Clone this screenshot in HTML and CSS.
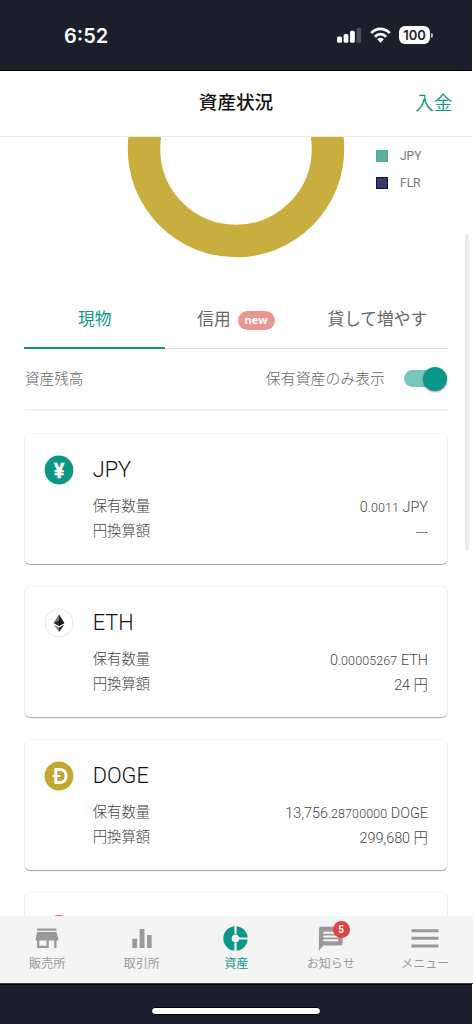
FILE: index.html
```html
<!DOCTYPE html>
<html lang="ja">
<head>
<meta charset="utf-8">
<title>資産状況</title>
<link rel="stylesheet" href="styles.css">
</head>
<body>
<div class="phone">
  <div class="status">
    <span class="clock">6:52</span>
    <div class="status-icons">
      <svg width="25" height="16" viewBox="0 0 25 16"><g fill="#fff"><rect x="0" y="9.5" width="5" height="6.2" rx="1.5"/><rect x="6.6" y="7" width="4.8" height="8.7" rx="1.5"/><rect x="13" y="3.8" width="4.8" height="11.9" rx="1.5"/></g><rect x="19.6" y="0.7" width="4.5" height="15" rx="1.5" fill="#4b505a"/></svg>
      <svg class="wifi" width="21" height="16" viewBox="0 0 21 16" fill="none" stroke="#fff" stroke-width="2.8"><path d="M1.3 6.1C6.5 0.5 14.5 0.5 19.7 6.1"/><path d="M4.9 9.7c3.3-3.4 7.9-3.4 11.2 0"/><path d="M7.2 12.2c1.9-1.8 4.7-1.8 6.6 0L10.5 15.8z" fill="#fff" stroke="none"/></svg>
      <span class="battery">100</span><span class="battery-tip"></span>
    </div>
  </div>
  <header class="header"><span></span><h1>資産状況</h1><a class="deposit">入金</a></header>
  <main class="content">
    <section class="chart">
      <svg class="donut" width="218" height="121" viewBox="0 0 218 121"><circle cx="109" cy="12" r="92" fill="none" stroke="#c7ae3e" stroke-width="32.5"/></svg>
      <ul class="legend"><li><i class="swatch jpy"></i>JPY</li><li><i class="swatch flr"></i>FLR</li></ul>
    </section>
    <nav class="tabs">
      <a class="tab active">現物</a><a class="tab">信用<span class="new">new</span></a><a class="tab">貸して増やす</a>
    </nav>
    <div class="filter"><span>資産残高</span><span class="filter-label">保有資産のみ表示</span><span class="switch"><i class="knob"></i></span></div>
    <div class="cards">
      <article class="card">
        <svg class="coin" viewBox="0 0 30 30"><circle cx="15" cy="15" r="14.4" fill="#0c9687"/><text class="yen" x="15" y="22.500" text-anchor="middle">¥</text></svg>
        <div class="info"><h2>JPY</h2>
          <div class="row"><span>保有数量</span><span class="value">0<small>.0011</small> JPY</span></div>
          <div class="row"><span>円換算額</span><span class="value dash">---</span></div></div>
      </article>
      <article class="card">
        <svg class="coin" viewBox="0 0 30 30"><circle cx="15" cy="15" r="14" fill="#fff" stroke="#dedede" stroke-width=".8"/><path d="M15 6.2L9.6 15l5.4 3.1z" fill="#777"/><path d="M15 6.2L20.4 15L15 18.1z" fill="#222"/><path d="M9.6 15L15 12.5L20.4 15L15 18.1z" fill="#111" opacity=".75"/><path d="M9.6 16.4L15 19.5V24z" fill="#888"/><path d="M20.4 16.4L15 19.5V24z" fill="#222"/></svg>
        <div class="info"><h2>ETH</h2>
          <div class="row"><span>保有数量</span><span class="value">0<small>.00005267</small> ETH</span></div>
          <div class="row"><span>円換算額</span><span class="value">24 円</span></div></div>
      </article>
      <article class="card">
        <svg class="coin" viewBox="0 0 30 30"><circle cx="15" cy="15" r="14.4" fill="#c1a632"/><path d="M11.8 8.4H16c3.700 0 6 2.500 6 6.600s-2.300 6.600-6 6.600h-4.200z" fill="none" stroke="#fff" stroke-width="3"/><path d="M8.500 15h8" stroke="#fff" stroke-width="2"/></svg>
        <div class="info"><h2>DOGE</h2>
          <div class="row"><span>保有数量</span><span class="value">13,756<small>.28700000</small> DOGE</span></div>
          <div class="row"><span>円換算額</span><span class="value">299,680 円</span></div></div>
      </article>
      <article class="card"><svg class="coin" viewBox="0 0 30 30"><circle cx="15" cy="15.300" r="14.200" fill="#e0607e"/></svg></article>
    </div>
    <i class="scrollbar"></i>
  </main>
  <nav class="bottom-nav">
    <a class="nav-item"><svg width="30" height="28" viewBox="0 0 30 28"><path fill="#999" d="M5 4.500h19.500v2.300H5zM5 8h19.500l1.700 6.200v2.300h-1.700v7.600h-2.300v-7.600h-5.500v7.600H5v-7.600H3.800v-2.300zM7.300 16.500v5.300h7.100v-5.300z"/></svg>販売所</a>
    <a class="nav-item"><svg width="30" height="28" viewBox="0 0 30 28"><path fill="#999" d="M5.300 14.800h4.900v9.300H5.300zM12.600 5h4.900v19.100h-4.900zM20 11h4.700v13.100H20z"/></svg>取引所</a>
    <a class="nav-item on"><svg width="30" height="28" viewBox="0 0 30 28"><circle cx="14.500" cy="14.500" r="8" fill="none" stroke="#0c9687" stroke-width="8.400"/><path d="M14.500 1.500v9M14.500 18.500v9M18 14.500h9" stroke="#f4f4f4" stroke-width="2.200"/></svg>資産</a>
    <a class="nav-item"><svg width="30" height="28" viewBox="0 0 30 28"><path fill="#999" d="M5.100 2.700h19.200q2.300 0 2.300 2.300v14.300q0 2.300-2.300 2.300H7.600L2.900 26.500V5q0-2.300 2.200-2.300z"/><path stroke="#f4f4f4" stroke-width="2" d="M7.300 8.700h14.900M7.300 12.500h14.900M7.300 16.300h14.900"/></svg>お知らせ<b class="count">5</b></a>
    <a class="nav-item"><svg width="30" height="28" viewBox="0 0 30 28"><path stroke="#999" stroke-width="2.900" d="M1.500 6.700h27M1.500 14.300h27M1.500 22h27"/></svg>メニュー</a>
  </nav>
  <footer class="home"><i></i></footer>
</div>
</body>
</html>
```
FILE: styles.css
```css
* { box-sizing: border-box; }
body { margin: 0; background: #fff; font-family: Roboto, "Noto Sans CJK JP", sans-serif; color: #666; }
h1, h2, ul { margin: 0; padding: 0; font-weight: inherit; list-style: none; }
svg { display: block; flex: none; }
.phone { width: 473px; height: 1024px; display: flex; flex-direction: column; overflow: hidden; }

.status { height: 71px; flex: none; width: 472px; background: #1a1f2b; border-bottom: 1px solid #000; display: flex; justify-content: space-between; padding: 0 39px 0 64px; align-items: center; color: #fff; }
.clock { font: 600 20px/24px Inter, sans-serif; padding-top: 2px; }
.status-icons { display: flex; align-items: center; }
.wifi { margin: 0 8px 0 8px; }
.battery { width: 31px; height: 18px; border-radius: 6px; background: #fff; color: #1a1f2b; font: 600 13px/18px Inter, sans-serif; text-align: center; }
.battery-tip { width: 2px; height: 5px; margin-left: 1px; border-radius: 0 2px 2px 0; background: #bbb; }

.header { height: 66px; flex: none; border-bottom: 1px solid #e8e8e8; display: grid; grid-template-columns: 1fr auto 1fr; align-items: center; padding: 0 20.500px 1px 19.500px; }
.header h1 { font-size: 18.6px; line-height: 28px; font-weight: 500; color: #111; }
.deposit { justify-self: end; font-size: 18.8px; line-height: 28px; color: #0c9687; font-weight: 350; padding-top: 1px; }

.content { flex: 1; min-height: 0; position: relative; overflow: hidden; padding: 0 25px 0 25px; }
.chart { height: 152px; display: flex; padding-left: 102px; }
.legend { padding: 7px 0 0 31px; font-size: 12px; font-weight: 400; }
.legend li { display: flex; align-items: center; height: 24px; line-height: 16px; margin-bottom: 3px; color: #777; }
.swatch { width: 12px; height: 12px; margin-right: 12px; }
.jpy { background: #5bb09f; border: 1px solid #4aaa98; }
.flr { background: #373967; border: 1px solid #11104e; }

.tabs { display: flex; height: 60px; margin: 0 0 0 -1px; border-bottom: 1px solid #ddd; }
.tab { flex: 1; display: flex; align-items: center; justify-content: center; font-size: 16.700px; line-height: 24px; height: 60px; padding-top: 2px; }
.active { color: #0c9687; border-bottom: 2px solid #0c9687; padding-top: 4px; }
.new { margin-left: 7px; width: 37px; height: 19px; border-radius: 10px; background: #ea9693; color: #fff; font: 700 11px/18px "Open Sans", sans-serif; text-align: center; }
.filter { height: 62px; padding-bottom: 1px; border-bottom: 2px solid #f3f3f3; display: flex; align-items: center; font-size: 14.600px; line-height: 20px; color: #666; font-weight: 300; }
.filter span:not(.switch) { margin-top: 1px; }
.filter .filter-label { margin-left: auto; font-size: 14.900px; }
.switch { width: 43px; height: 17px; margin: 0 1px 0 19px; border-radius: 9px; background: #76c6bd; display: flex; align-items: center; justify-content: flex-end; }
.knob { width: 24px; height: 24px; flex: none; border-radius: 50%; background: #0c9687; box-shadow: 0 1px 2px #0006; }

.cards { display: flex; flex-direction: column; gap: 23px; padding: 23px 1px 0 0; }
.card { height: 130px; flex: none; border-radius: 5px; background: #fff; box-shadow: 0 1px 1px #0005, 0 0 2px #0002; display: flex; padding: 21px 19px 0 19px; }
.coin { width: 30px; height: 30px; margin-right: 18.700px; }
.yen { font: 700 20px Roboto, sans-serif; fill: #fff; stroke: #fff; stroke-width: .3px; }
.info { flex: 1; }
.info h2 { font-size: 21.700px; line-height: 28px; padding-top: 1px; color: #111; font-weight: 350; }
.row { display: flex; justify-content: space-between; height: 25px; line-height: 25px; font-size: 14.400px; font-weight: 300; color: #444; }
.info h2 + .row { margin-top: 10px; }
.value { font-size: 14.400px; padding-top: 1px; }
.value small { font-size: 12.500px; letter-spacing: .1px; }
.dash { font-size: 14px; }
.scrollbar { position: absolute; right: 4px; top: 97px; width: 4px; height: 317px; border-radius: 2px; background: #ebebeb; }

.bottom-nav { flex: none; height: 68px; background: #f4f4f4; display: grid; grid-template-columns: repeat(5, 94.500px); border-bottom: 1px solid #384039; }
.nav-item { position: relative; display: flex; flex-direction: column; align-items: center; padding-top: 8px; font-size: 12.100px; line-height: 18px; color: #999; gap: 3px; }
.on { color: #0c9687; }
.count { position: absolute; left: 49px; top: 5px; width: 17px; height: 17px; border-radius: 50%; background: #de4440; color: #fff; font-size: 10px; line-height: 17px; text-align: center; }
.home { flex: none; height: 40px; width: 472px; background: #1a1f2b; display: flex; justify-content: center; align-items: flex-start; padding-top: 22px; border-top: 1px solid #000; }
.home i { width: 170px; height: 8px; border: 1px solid #000; border-radius: 4px; background: #fff; }
```
